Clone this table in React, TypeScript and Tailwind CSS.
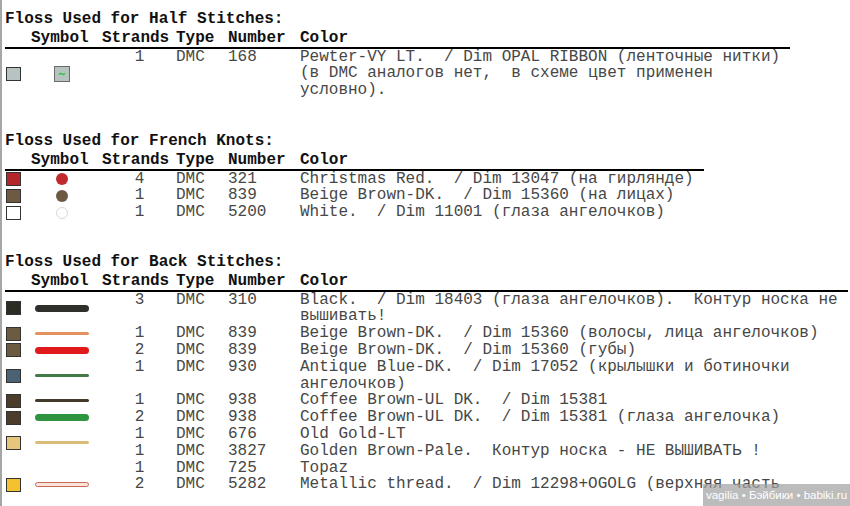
import React from 'react'

type Sym =
  | { kind: 'half' }
  | { kind: 'dot'; color: string; ring?: boolean }
  | { kind: 'line'; color: string; size: 'thin' | 'thick' | 'outline'; edge?: string }

interface FlossRow {
  swatch?: string
  symbol?: Sym
  span?: number
  covered?: boolean
  strands: string
  type: string
  number: string
  color: string[]
}

const halfRows: FlossRow[] = [
  {
    swatch: '#b7c3c2',
    symbol: { kind: 'half' },
    strands: '1',
    type: 'DMC',
    number: '168',
    color: [
      'Pewter-VY LT.  / Dim OPAL RIBBON (ленточные нитки)',
      '(в DMC аналогов нет,  в схеме цвет применен',
      'условно).',
    ],
  },
]

const knotRows: FlossRow[] = [
  { swatch: '#b3262a', symbol: { kind: 'dot', color: '#bf2a2c' }, strands: '4', type: 'DMC', number: '321', color: ['Christmas Red.  / Dim 13047 (на гирлянде)'] },
  { swatch: '#6e5a42', symbol: { kind: 'dot', color: '#6e5a42' }, strands: '1', type: 'DMC', number: '839', color: ['Beige Brown-DK.  / Dim 15360 (на лицах)'] },
  { swatch: '#ffffff', symbol: { kind: 'dot', color: '#ffffff', ring: true }, strands: '1', type: 'DMC', number: '5200', color: ['White.  / Dim 11001 (глаза ангелочков)'] },
]

const backRows: FlossRow[] = [
  {
    swatch: '#2c2c25',
    symbol: { kind: 'line', color: '#2f2f2b', size: 'thick' },
    strands: '3',
    type: 'DMC',
    number: '310',
    color: ['Black.  / Dim 18403 (глаза ангелочков).  Контур носка не', 'вышивать!'],
  },
  { swatch: '#6c5a41', symbol: { kind: 'line', color: '#e2915f', size: 'thin' }, strands: '1', type: 'DMC', number: '839', color: ['Beige Brown-DK.  / Dim 15360 (волосы, лица ангелочков)'] },
  { swatch: '#6c5a41', symbol: { kind: 'line', color: '#e01a1a', size: 'thick' }, strands: '2', type: 'DMC', number: '839', color: ['Beige Brown-DK.  / Dim 15360 (губы)'] },
  {
    swatch: '#4a6274',
    symbol: { kind: 'line', color: '#447a48', size: 'thin' },
    strands: '1',
    type: 'DMC',
    number: '930',
    color: ['Antique Blue-DK.  / Dim 17052 (крылышки и ботиночки', 'ангелочков)'],
  },
  { swatch: '#4b3d2a', symbol: { kind: 'line', color: '#433a2c', size: 'thin' }, strands: '1', type: 'DMC', number: '938', color: ['Coffee Brown-UL DK.  / Dim 15381'] },
  { swatch: '#4b3d2a', symbol: { kind: 'line', color: '#2f9440', size: 'thick' }, strands: '2', type: 'DMC', number: '938', color: ['Coffee Brown-UL DK.  / Dim 15381 (глаза ангелочка)'] },
  { swatch: '#e6c57c', symbol: { kind: 'line', color: '#d9bc78', size: 'thin' }, span: 2, strands: '1', type: 'DMC', number: '676', color: ['Old Gold-LT'] },
  { covered: true, strands: '1', type: 'DMC', number: '3827', color: ['Golden Brown-Pale.  Контур носка - НЕ ВЫШИВАТЬ !'] },
  { strands: '1', type: 'DMC', number: '725', color: ['Topaz'] },
  { swatch: '#f3c22e', symbol: { kind: 'line', color: '#fde3da', size: 'outline', edge: '#c66a58' }, strands: '2', type: 'DMC', number: '5282', color: ['Metallic thread.  / Dim 12298+OGOLG (верхняя часть'] },
]

function SymbolMark({ sym }: { sym: Sym }) {
  if (sym.kind === 'half') {
    return (
      <svg width="16" height="16" viewBox="0 0 16 16" className="mx-auto block">
        <rect x="0.5" y="0.5" width="15" height="15" fill="#b5c3c1" stroke="#6a6a6a" />
        <path d="M5 8.6 Q6.5 6.8 8 8 T11 7.4" fill="none" stroke="#2fc23c" strokeWidth="1.4" />
      </svg>
    )
  }
  if (sym.kind === 'dot') {
    return (
      <div
        className={sym.ring ? 'mx-auto h-[12px] w-[12px] rounded-full border border-[#d8d8d8]' : 'mx-auto h-[12px] w-[12px] rounded-full'}
        style={{ backgroundColor: sym.color }}
      />
    )
  }
  const cls =
    sym.size === 'thick'
      ? 'mx-auto h-[7px] w-[54px] rounded-full'
      : sym.size === 'outline'
        ? 'mx-auto h-[5px] w-[54px] rounded-full border'
        : 'mx-auto h-[3px] w-[54px] rounded-[2px]'
  return <div className={cls} style={{ backgroundColor: sym.color, borderColor: sym.edge }} />
}

function FlossTable({ title, rows, className }: { title: string; rows: FlossRow[]; className?: string }) {
  return (
    <div className={className}>
      <div className="font-bold text-[#111]">{title}</div>
      <table className="border-collapse">
        <thead>
          <tr className="border-b-2 border-black font-bold text-[#111]">
            <th className="w-[21px] p-0" />
            <th className="w-[72px] pt-[2px] pl-[5px] text-left font-bold">Symbol</th>
            <th className="w-[74px] pt-[2px] pl-[4px] text-left font-bold">Strands</th>
            <th className="w-[52px] pt-[2px] pl-[4px] text-left font-bold">Type</th>
            <th className="w-[72px] pt-[2px] pl-[4px] text-left font-bold">Number</th>
            <th className="pt-[2px] pl-[4px] pr-[10px] text-left font-bold">Color</th>
          </tr>
        </thead>
        <tbody>
          {rows.map((r, i) => (
            <tr key={i} className="align-top">
              {!r.covered && (
                <td rowSpan={r.span ?? 1} className="p-0 align-middle">
                  {r.swatch && (
                    <div className="ml-[1px] h-[14px] w-[15px] border border-[#333]" style={{ backgroundColor: r.swatch }} />
                  )}
                </td>
              )}
              {!r.covered && (
                <td rowSpan={r.span ?? 1} className="p-0 align-middle">
                  {r.symbol && <SymbolMark sym={r.symbol} />}
                </td>
              )}
              <td className="p-0 pl-[9px] text-center">{r.strands}</td>
              <td className="p-0 pl-[4px]">{r.type}</td>
              <td className="p-0 pl-[4px]">{r.number}</td>
              <td className="p-0 pl-[4px] pr-[10px] whitespace-pre">
                {r.color.map((line, j) => (
                  <div key={j}>{line}</div>
                ))}
              </td>
            </tr>
          ))}
        </tbody>
      </table>
    </div>
  )
}

export default function App() {
  return (
    <div className="relative h-[506px] w-[850px] overflow-hidden border-l-2 border-[#a6a6a6] bg-white pl-[3px] pt-[11px] font-['Liberation_Mono',monospace] text-[16px] leading-[16.8px] text-[#474747]">
      <FlossTable title="Floss Used for Half Stitches:" rows={halfRows} />
      <FlossTable title="Floss Used for French Knots:" rows={knotRows} className="mt-[34px]" />
      <FlossTable title="Floss Used for Back Stitches:" rows={backRows} className="mt-[33px]" />

      {/* site watermark */}
      <div className="absolute bottom-0 right-0 flex h-[22px] w-[147px] items-center justify-center bg-[rgba(160,160,160,0.7)] font-['Liberation_Sans',sans-serif] text-[11.5px] text-white">
        vagilia • Бэйбики • babiki.ru
      </div>
    </div>
  )
}
